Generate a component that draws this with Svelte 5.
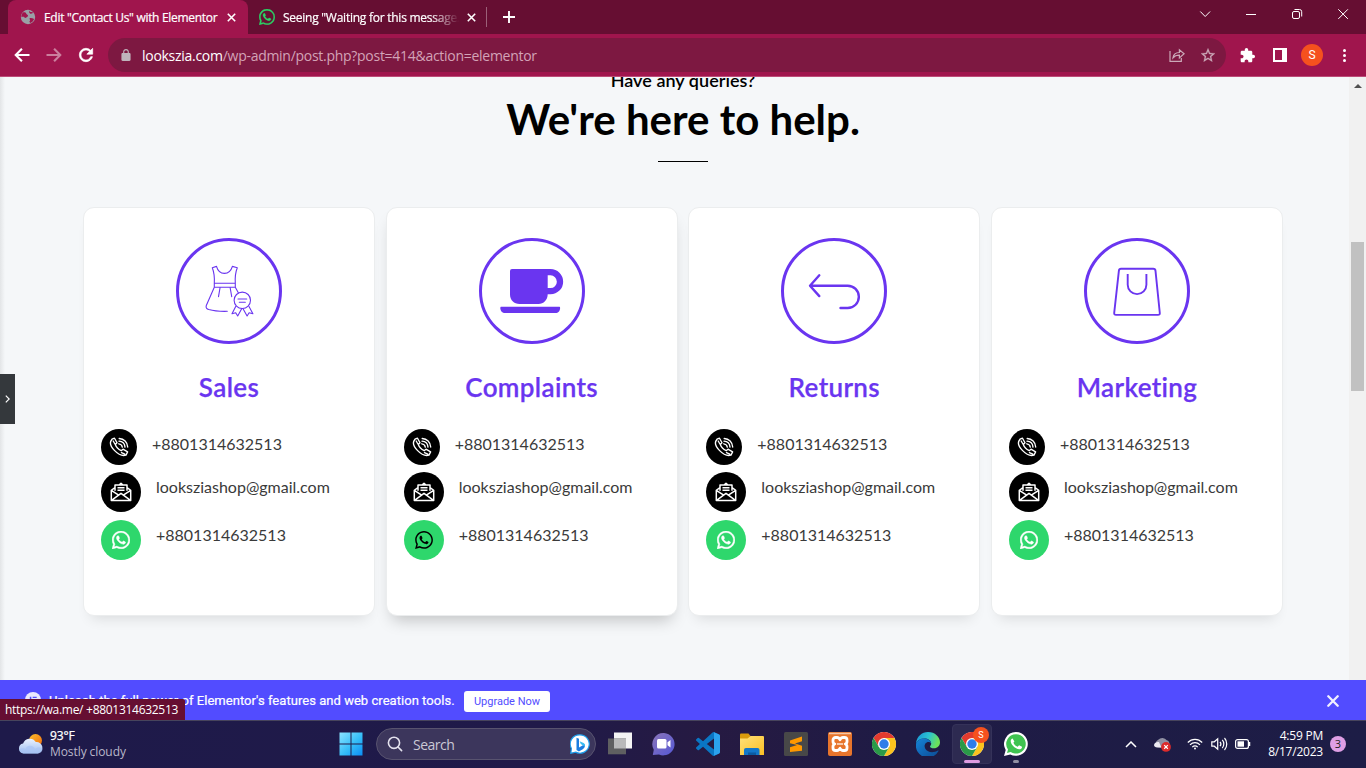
<script>
  const departments = [
    { name: 'Sales', icon: 'dress' },
    { name: 'Complaints', icon: 'cup', hovered: true },
    { name: 'Returns', icon: 'back' },
    { name: 'Marketing', icon: 'bag' }
  ];
  const phone = '+8801314632513';
  const email = 'looksziashop@gmail.com';
  const wa =
    'M380.9 97.1C339 55.1 283.2 32 223.9 32c-122.4 0-222 99.6-222 222 0 39.1 10.2 77.3 29.6 111L0 480l117.7-30.9c32.4 17.7 68.9 27 106.1 27h.1c122.3 0 224.1-99.6 224.1-222 0-59.3-25.2-115-67.1-157zm-157 341.6c-33.2 0-65.7-8.9-94-25.7l-6.7-4-69.8 18.3L72 359.2l-4.4-7c-18.5-29.4-28.2-63.3-28.2-98.2 0-101.7 82.8-184.5 184.6-184.5 49.3 0 95.6 19.2 130.4 54.1 34.8 34.9 56.2 81.2 56.1 130.5 0 101.8-84.9 184.6-186.6 184.6zm101.2-138.2c-5.5-2.8-32.8-16.2-37.9-18-5.1-1.9-8.8-2.8-12.5 2.8-3.7 5.6-14.3 18-17.6 21.8-3.2 3.7-6.5 4.2-12 1.4-32.6-16.3-54-29.1-75.5-66-5.7-9.8 5.7-9.1 16.3-30.3 1.8-3.7.9-6.9-.5-9.7-1.4-2.8-12.5-30.1-17.1-41.2-4.5-10.8-9.1-9.3-12.5-9.5-3.2-.2-6.9-.2-10.6-.2-3.7 0-9.7 1.4-14.8 6.9-5.1 5.6-19.4 19-19.4 46.3 0 27.3 19.9 53.7 22.6 57.4 2.8 3.7 39.1 59.7 94.8 83.8 35.2 15.2 49 16.5 66.6 13.9 10.7-1.6 32.8-13.4 37.4-26.4 4.6-13 4.6-24.1 3.2-26.4-1.3-2.5-5-3.9-10.5-6.6z';
</script>

{#snippet chromeLogo()}
  <svg class="app-icon" viewBox="0 0 24 24">
    <circle cx="12" cy="12" r="12" fill="#fff" />
    <path d="M1.6 6A12 12 0 0 1 22.4 6L12 6.3 6.9 15z" fill="#e33b2e" />
    <path d="M22.4 6A12 12 0 0 1 12 24l5.2-9L12 6z" fill="#fcc31e" />
    <path d="M12 24A12 12 0 0 1 1.6 6l5.3 9 10.3 0z" fill="#2a9a48" />
    <circle cx="12" cy="12" r="6" fill="#fff" />
    <circle cx="12" cy="12" r="4.7" fill="#2f7de9" />
  </svg>
{/snippet}

<div class="screen">
  <div class="tabs">
    <div class="tab active">
      <svg class="globe" viewBox="0 0 16 16">
        <circle cx="8" cy="8" r="7.2" fill="#9aa0a6" />
        <path d="M3 3.5c1.600-.4 3 .2 3.300 1.200.3 1 1.700.8 1.700 2 0 1.100-1.300 1-1.700 1.900-.3.800-1.800.2-3.200-1.100L1.400 8.200C1.300 6.200 2 4.500 3 3.500zM9.200 1.500c.3 1.300 1.200 1.500 2.200 1.500l1.800.4-1.100 1.200-2 .1-1-1.500zM9.500 9.200c1.300-.5 3.200 0 4.600.7-.7 1.900-2 3.300-3.700 4l-1.100-1.200.8-1.100z" fill="#a0154d" />
      </svg>
      <span class="tab-title t1">Edit "Contact Us" with Elementor</span>
      <svg class="x" viewBox="0 0 9 9"><path d="M.8.8l7.400 7.400M8.200.8L.8 8.200" /></svg>
    </div>
    <div class="tab second">
      <svg class="wa-fav" viewBox="0 30 448 452"><path d={wa} fill="#2bd366" stroke="#2bd366" stroke-width="8" /></svg>
      <span class="tab-title t2">Seeing "Waiting for this message.</span>
      <svg class="x" viewBox="0 0 9 9"><path d="M.8.8l7.400 7.400M8.200.8L.8 8.200" /></svg>
    </div>
    <i class="tab-rule"></i>
    <svg class="plus" viewBox="0 0 12 12"><path d="M6 0v12M0 6h12" stroke="#fff" stroke-width="1.900" /></svg>
    <div class="window-buttons">
      <svg viewBox="0 0 46 28"><path d="M18.300 11.500l4.900 5 4.900-5" /></svg>
      <svg viewBox="0 0 46 28"><path d="M18 14.500h10" /></svg>
      <svg viewBox="0 0 46 28"><rect x="18.500" y="11.500" width="7" height="7" rx="1.500" /><path d="M20.500 9.500h5a2.200 2.200 0 0 1 2.200 2.200v4.800" /></svg>
      <svg viewBox="0 0 46 28"><path d="M18.300 9.300l9.600 9.600M27.900 9.300l-9.600 9.600" /></svg>
    </div>
  </div>

  <div class="toolbar">
    <svg class="nav" viewBox="0 0 24 24" fill="#fff"><path d="M21 10.800H7.400l5.400-5.400L11 3.700 2.700 12l8.300 8.300 1.800-1.700-5.400-5.400H21z" /></svg>
    <svg class="nav faded" viewBox="0 0 24 24" fill="#fff"><path d="M3 10.800h13.600l-5.400-5.400L13 3.700l8.300 8.300-8.300 8.300-1.800-1.700 5.400-5.400H3z" /></svg>
    <svg class="nav" viewBox="0 0 24 24" fill="#fff" stroke="#fff" stroke-width=".8"><path d="M17.650 6.350C16.200 4.900 14.210 4 12 4c-4.420 0-7.990 3.580-7.990 8s3.570 8 7.990 8c3.730 0 6.840-2.550 7.730-6h-2.080c-.82 2.330-3.040 4-5.650 4-3.310 0-6-2.690-6-6s2.690-6 6-6c1.660 0 3.140.69 4.220 1.780L13 11h7V4l-2.350 2.350z" /></svg>
    <div class="omnibox">
      <svg class="lock" viewBox="4 1 16 21"><path fill="#bfb3bb" d="M18 8h-1V6c0-2.760-2.240-5-5-5S7 3.240 7 6v2H6c-1.100 0-2 .9-2 2v10c0 1.100.9 2 2 2h12c1.100 0 2-.9 2-2V10c0-1.100-.9-2-2-2zM9 6c0-1.660 1.340-3 3-3s3 1.340 3 3v2H9V6z" /></svg>
      <span class="url"><b>lookszia.com</b>/wp-admin/post.php?post=414&amp;action=elementor</span>
      <svg class="share" viewBox="0 0 16 16" fill="none" stroke="#cba9b8" stroke-width="1.200"><path d="M1 4v10.300h11.300V11M4 10.800c.4-3.400 2.700-5.200 6.400-5.300V2.700l4.700 4.100-4.700 4.100V8.200C7.500 8.200 5.500 9 4 10.800z" /></svg>
      <svg class="star" viewBox="2 2 20 19"><path fill="#cba9b8" stroke="#cba9b8" stroke-width=".4" d="M22 9.240l-7.190-.62L12 2 9.190 8.630 2 9.240l5.460 4.730L5.820 21 12 17.270 18.180 21l-1.630-7.030L22 9.240zM12 15.400l-3.760 2.270 1-4.280-3.320-2.880 4.380-.38L12 6.100l1.710 4.040 4.380.38-3.320 2.880 1 4.280L12 15.400z" /></svg>
    </div>
    <svg class="puzzle" viewBox="1 1 22 22"><path fill="#fff" d="M20.500 11H19V7c0-1.100-.9-2-2-2h-4V3.500C13 2.120 11.880 1 10.500 1S8 2.120 8 3.500V5H4c-1.100 0-1.990.9-1.990 2v3.800H3.500c1.490 0 2.700 1.210 2.700 2.700s-1.210 2.700-2.700 2.700H2V20c0 1.100.9 2 2 2h3.800v-1.500c0-1.490 1.210-2.700 2.700-2.700 1.490 0 2.700 1.210 2.700 2.700V22H17c1.100 0 2-.9 2-2v-4h1.500c1.380 0 2.500-1.120 2.500-2.500S21.880 11 20.500 11z" /></svg>
    <i class="side-panel"></i>
    <span class="avatar">S</span>
    <span class="menu"><i></i><i></i><i></i></span>
  </div>

  <main>
    <div class="page">
      <p class="kicker">Have any queries?</p>
      <h1>We're here to help.</h1>
      <i class="divider"></i>
      <div class="cards">
        {#each departments as d}
          <section class:hovered={d.hovered}>
            <svg class="badge" viewBox="0 0 106 106" fill="none" stroke="#6a35f0">
              <circle cx="53" cy="53" r="51.500" stroke-width="3" />
              {#if d.icon === 'dress'}
                <g stroke-width="1.100" stroke-linejoin="round" stroke-linecap="round">
                  <path d="M38.300 45.300c.3-5-.2-11-2-15.600l4.200-1.300c1.300 4.700 4 7 7.900 7s6.600-2.300 8-7l4.900 1.300c-1.900 4.600-2.300 10.600-2 15.600M38.300 45.300h21v4h-21zM38.300 49.300L30.300 67.500c-.8 2.200.5 3.300 2.500 4 5.200 1.500 11 2 18.500 1.800M59.300 49.300l3 5.500M44 50l-1.500 8.700M54.200 50l1.500 8.700" />
                  <circle cx="66.300" cy="62.300" r="8.200" />
                  <path d="M62 61h8.700M63.300 64.300h6M59.700 68.500L56 75.700l3.700-1 2 3.300 4.100-7.500M73 68.500l3.900 7.200-3.800-1-2 3.300-4.200-7.500" />
                </g>
              {:else if d.icon === 'cup'}
                <g fill="#6a35f0" stroke="none">
                  <path fill-rule="evenodd" d="M33 31h38.500a12.650 12.650 0 0 1 0 25.300h-2.800C68.700 62 64.500 66 59.500 66H40.500C35 66 31 62 31 56.500V33a2 2 0 0 1 2-2zm35.700 6.300V50h2.800a6.350 6.350 0 0 0 0-12.700z" />
                  <path d="M22.300 68.700h57.800c.8 0 1 .5 1 1.200 0 3-2 5.100-4.600 5.100h-50.500c-2.600 0-4.700-2.100-4.700-5.100 0-.7.3-1.200 1-1.200z" />
                </g>
              {:else if d.icon === 'back'}
                <path d="M38.300 37.300L29 47.700l9.300 10.400M29.500 47.700h37.200a11.150 11.150 0 0 1 0 22.300h-7.200" stroke-width="2.400" stroke-linecap="round" stroke-linejoin="round" />
              {:else}
                <path d="M37 30.800h32.300q2 0 2.200 2l4.300 42.200q.2 1.900-1.800 1.900H32q-2 0-1.800-2l4.700-42.200q.2-1.900 2.100-1.900zM43.700 36v10.800a9.350 9.350 0 0 0 18.700 0V36" stroke-width="1.900" />
              {/if}
            </svg>
            <h2>{d.name}</h2>
            <div class="line">
              <span class="dot small">
                <svg width="20" height="20" viewBox="0 0 20 20" fill="none" stroke="#fff" stroke-width="1.350" stroke-linecap="round" stroke-linejoin="round">
                  <path d="M3 2.200L5.500 1.200 8 5.800 6.300 7.500c.9 2.600 2.900 4.700 5.900 6.200l1.800-1.500 4.600 2.700-1.600 3.200c-3.600 1.300-8.200-1.200-11.600-4.700C1.600 9.600.3 5.300 3 2.200zM4.200 4l1.700 3M12.500 15.600l3.300 1.600" />
                  <path d="M9.800 6.800c1.900.2 3.200 1.500 3.500 3.400M10 4.200c3.300.2 5.700 2.600 6 5.900M10.200 1.500c4.800.3 8.200 3.800 8.500 8.500" />
                </svg>
              </span>
              <span>{phone}</span>
            </div>
            <div class="line mail">
              <span class="dot">
                <svg width="22" height="20" viewBox="0 0 22 20" fill="none" stroke="#fff" stroke-width="1.500" stroke-linejoin="round">
                  <path d="M5 8.800V3h12v5.800M9 3l2-1.800L13 3M5 5.500L1.300 8.300v10.200h19.400V8.300L17 5.500M1.300 8.300l7.400 4.900M20.700 8.300l-7.400 4.900M1.500 18.300L11 11.300l9.500 7M7.500 5.800h7M7.500 8.300h7" />
                </svg>
              </span>
              <span>{email}</span>
            </div>
            <div class="line chat">
              <span class="dot green">
                <svg width="18" height="18" viewBox="0 30 448 452"><path d={wa} fill={d.hovered ? '#000' : '#fff'} stroke={d.hovered ? '#000' : '#fff'} stroke-width={d.hovered ? 0 : 12} /></svg>
              </span>
              <span>{phone}</span>
            </div>
          </section>
        {/each}
      </div>
    </div>
    <div class="scrollbar">
      <svg viewBox="0 0 8 4"><path d="M0 4L4 0l4 4z" fill="#505050" /></svg>
      <i></i>
    </div>
    <i class="edge-shade"></i>
    <div class="handle"><svg viewBox="0 0 5 8"><path d="M.8.6L4.200 4 .8 7.400" fill="none" stroke="#fff" stroke-width="1.200" /></svg></div>
  </main>

  <div class="banner">
    <svg class="e-logo" viewBox="0 0 16 16"><circle cx="8" cy="8" r="8" fill="#e9e8ff" /><path d="M4.800 4.700h1.500v6.600H4.800zM7.700 4.700h4V6h-4zM7.700 7.300h4v1.300h-4zM7.700 10h4v1.300h-4z" fill="#524cff" /></svg>
    <span class="promo">Unleash the full power of Elementor's features and web creation tools.</span>
    <span class="upgrade">Upgrade Now</span>
    <svg class="dismiss" viewBox="0 0 12 12"><path d="M1.300 1.300l9.400 9.400M10.700 1.300l-9.400 9.400" stroke="#f1f0ff" stroke-width="2.300" stroke-linecap="round" /></svg>
    <div class="status"><span>https://wa.me/ +8801314632513</span></div>
  </div>

  <div class="taskbar">
    <div class="weather">
      <svg viewBox="0 0 26 22">
        <defs>
          <linearGradient id="cl" x1="0" y1="0" x2="0" y2="1"><stop offset="0" stop-color="#eaf2ff" /><stop offset="1" stop-color="#9dbdf0" /></linearGradient>
          <linearGradient id="sun" x1="0" y1="0" x2="1" y2="1"><stop offset="0" stop-color="#fbc02d" /><stop offset="1" stop-color="#f26a0d" /></linearGradient>
        </defs>
        <circle cx="17.500" cy="7.500" r="6.500" fill="url(#sun)" />
        <path d="M5.500 20.500a5 5 0 0 1-.4-9.900 7 7 0 0 1 12.700-1.500 5.800 5.800 0 0 1 2.100 11.400z" fill="url(#cl)" />
        <path d="M5.500 20.500h14.400a5 5 0 0 0 4.600-4.700c-3-2.300-6-1.500-7.500.2-1.700-4-8-4.500-9.500 0-1.800-1.200-4.500-.7-6 .6.5 2.200 2 3.700 4 3.900z" fill="#a9c5f5" opacity=".7" />
      </svg>
      <div><span class="temp">93°F</span><span class="cond">Mostly cloudy</span></div>
    </div>
    <div class="apps">
      <div class="slot">
        <svg class="app-icon" viewBox="0 0 24 24">
          <defs><linearGradient id="win" x1="0" y1="0" x2="1" y2="1"><stop offset="0" stop-color="#8ce4ff" /><stop offset=".55" stop-color="#35bdf8" /><stop offset="1" stop-color="#0b8df5" /></linearGradient></defs>
          <path d="M.5.500h11v11H.5zM12.500.500h11v11h-11zM.5 12.500h11v11H.5zM12.500 12.500h11v11h-11z" fill="url(#win)" />
        </svg>
      </div>
      <div class="search">
        <svg class="lens" viewBox="0 0 16 16" fill="none" stroke="#e4e2ee" stroke-width="1.600" stroke-linecap="round"><circle cx="7" cy="6.800" r="5.600" /><path d="M11 11l3.600 3.600" /></svg>
        <span>Search</span>
        <svg class="bing" viewBox="0 0 20 20">
          <path d="M10 .8a9.200 9.200 0 1 1-4.300 17.300L.8 19.300l.6-4.800A9.200 9.200 0 0 1 10 .8z" fill="#fff" stroke="#1a9bea" stroke-width="1.200" />
          <path d="M6.500 3.800l2.500.9v8.700l5.600-3.100c.9 2.400-.3 4-1.800 4.900l-3.900 2.200-2.400-1.500z" fill="#1b7de0" />
          <path d="M9.600 7.200l4 1.700c1.400.7 1.600 2.200 1 3.500L10.800 10z" fill="#38bdf2" />
        </svg>
      </div>
      <div class="slot">
        <svg class="app-icon" viewBox="0 0 24 24">
          <path d="M6 .5h18v16H6z" fill="#f4f4f4" /><path d="M0 6.500h18v15.800H0z" fill="#5f5f61" /><path d="M6 6.500h12v10H6z" fill="#b9b9ba" />
        </svg>
      </div>
      <div class="slot">
        <svg class="app-icon" viewBox="0 0 24 24">
          <defs><linearGradient id="teams" x1="0" y1="0" x2="1" y2="1"><stop offset="0" stop-color="#8a74b8" /><stop offset="1" stop-color="#5558d6" /></linearGradient></defs>
          <path d="M12 1a11.200 11.200 0 1 1-5 21.500L.8 23l1-5.300A11.200 11.200 0 0 1 12 1z" fill="url(#teams)" />
          <rect x="5" y="7" width="9.500" height="9.500" rx="1.500" fill="#fff" /><path d="M15.500 10.300L18.500 8v7.600l-3-2.300z" fill="#fff" />
        </svg>
      </div>
      <div class="slot">
        <svg class="app-icon" viewBox="0 0 24 24">
          <path fill="#0a76c4" d="M23.150 2.587L18.210.21a1.494 1.494 0 0 0-1.705.29l-9.460 8.630-4.120-3.128a.999.999 0 0 0-1.276.057L.327 7.261A1 1 0 0 0 .326 8.740L3.899 12 .326 15.260a1 1 0 0 0 .001 1.479L1.650 17.940a.999.999 0 0 0 1.276.057l4.120-3.128 9.460 8.630a1.492 1.492 0 0 0 1.704.29l4.942-2.377A1.500 1.500 0 0 0 24 20.060V3.939a1.500 1.500 0 0 0-.85-1.352zm-5.146 14.861L10.826 12l7.178-5.448v10.896z" />
          <path fill="#2ba2ee" d="M18 .2l5.100 2.400q.9.400.9 1.400v16q0 1-.9 1.400L18 23.800z" />
        </svg>
      </div>
      <div class="slot">
        <svg class="app-icon" viewBox="0 0 24 24">
          <defs><linearGradient id="fold" x1="0" y1="0" x2="1" y2="1"><stop offset="0" stop-color="#ffe17a" /><stop offset="1" stop-color="#fbbf24" /></linearGradient></defs>
          <path d="M0 2.500q0-1 1-1h7.500l2 2.500L8 7H0z" fill="#d99a0c" />
          <path d="M0 6.500h7.500L10.500 4H23q1 0 1 1v18H0z" fill="url(#fold)" />
          <path d="M4 23v-5q0-2 2-2h11.500q2 0 2 2v5z" fill="#1277c9" /><path d="M8 20.500h8V23H8z" fill="#0b5ba1" />
        </svg>
      </div>
      <div class="slot">
        <svg class="app-icon" viewBox="0 0 24 24">
          <rect width="24" height="24" rx="1.500" fill="#484848" />
          <path d="M6 8.500L18 4.500v4.700l-7 2.300 7 2.200v5L6 20v-4.700l7.200-2.200L6 11.200z" fill="#ff9800" />
        </svg>
      </div>
      <div class="slot">
        <svg class="app-icon" viewBox="0 0 24 24">
          <rect width="24" height="24" rx="2" fill="#e8752c" /><path d="M1 1.500h22" stroke="#f6c6a4" stroke-width="1.500" />
          <path d="M7.500 5.500H9q2 0 3 2.300 1-2.300 3-2.300h1.500A2.500 2.500 0 0 1 19 8v1.500q0 2-1.800 2.500 1.800.6 1.800 2.500V16a2.500 2.500 0 0 1-2.500 2.500H15q-2 0-3-2.300-1 2.300-3 2.300H7.500A2.500 2.500 0 0 1 5 16v-1.500q0-1.900 1.800-2.500Q5 11.500 5 9.500V8a2.500 2.500 0 0 1 2.500-2.500z" fill="none" stroke="#fff" stroke-width="2.800" stroke-linejoin="round" />
          <path d="M9 12h6" stroke="#fff" stroke-width="1.200" />
        </svg>
      </div>
      <div class="slot">{@render chromeLogo()}</div>
      <div class="slot">
        <svg class="app-icon" viewBox="0 0 24 24">
          <defs>
            <linearGradient id="e1" x1="0" y1="0" x2="1" y2=".3"><stop offset="0" stop-color="#1690d8" /><stop offset=".55" stop-color="#2bc3d2" /><stop offset="1" stop-color="#6be05a" /></linearGradient>
            <linearGradient id="e2" x1="0" y1="0" x2="1" y2="1"><stop offset="0" stop-color="#1584d8" /><stop offset="1" stop-color="#0c4a94" /></linearGradient>
          </defs>
          <path d="M0 11.500C.6 4.500 5.800 0 12 0c7 0 12 5 12 10.300 0 3.500-2.600 6-6 6-2.500 0-4-.9-4-1.900 0-.6 1.200-1.200 1.200-3C15.200 8.600 12 6.500 8.500 6.500 4.500 6.500 1.500 8.300 0 11.500z" fill="url(#e1)" />
          <path d="M0 11.700C1.200 8.300 4.800 6.300 8.600 6.500c3.400.2 6.400 2.300 6.500 4.700-1-1-2.600-1.600-4-1-2.500 1.100-3.200 4-1.800 6.600 2.300 4 8.500 4.300 12.600 1.700.5-.3.900.1.600.6A12 12 0 0 1 0 11.700z" fill="url(#e2)" />
        </svg>
      </div>
      <div class="slot current">{@render chromeLogo()}<span class="mini">S</span><i class="run"></i></div>
      <div class="slot">
        <svg class="app-icon" viewBox="0 0 24 24">
          <path d="M12.200 0A11.900 11.900 0 1 1 6.300 22.400L0 24l1.700-6.100A11.900 11.900 0 0 1 12.200 0z" fill="#fff" />
          <path d="M12.200 2.200A9.700 9.700 0 1 1 6.700 20L3 21l1-3.600A9.700 9.700 0 0 1 12.200 2.200z" fill="#3fc351" />
          <path d="M8.600 6.500c-.6-.1-1.900.8-1.900 2.600 0 3.500 4.700 8.200 8.600 8.200 1.500 0 2.800-1.200 2.700-2.500l-2.900-1.500-1.500 1.500c-2-.8-3.400-2.200-4.200-4l1-1.300z" fill="#fff" />
        </svg>
        <i class="run idle"></i>
      </div>
    </div>
    <div class="tray">
      <svg class="caret" viewBox="0 0 12 7"><path d="M1 6l5-5 5 5" fill="none" stroke="#fff" stroke-width="1.500" /></svg>
      <svg class="cloud" viewBox="0 0 16 14"><path d="M4 9.500A3.700 3.700 0 0 1 4 2.600 5 5 0 0 1 12 3c2 .5 2.500 2 2.500 3.500L8 10z" fill="#8f90a3" /><path d="M0 7.500C.3 5 3 4.300 4.800 4.800L7 9.800H3C1.300 9.800 0 9 0 7.500z" fill="#eceaf2" /><circle cx="11.300" cy="9.300" r="4.600" fill="#dc2b2b" /><path d="M9.600 7.600l3.400 3.400M13 7.600L9.600 11" stroke="#fff" stroke-width="1.100" /></svg>
      <svg class="wifi" viewBox="0 0 16 12" fill="none" stroke="#fff" stroke-width="1.200"><path d="M.8 4.500C4.800.2 11.200.2 15.200 4.500M3 6.900c2.900-3 7.100-3 10 0M5.300 9.200c1.600-1.700 3.800-1.700 5.400 0" /><circle cx="8" cy="10.400" r="1" fill="#fff" stroke="none" /></svg>
      <svg class="vol" viewBox="0 0 17 14" fill="none" stroke="#fff" stroke-width="1.200"><path d="M.8 4.800v4.400h2.500l3.400 3V1.800l-3.400 3zM9 4.800c1 1.200 1 3.200 0 4.400M11.300 2.900c2 2.300 2 5.900 0 8.200M13.500 1c3 3.300 3 8.700 0 12" /></svg>
      <svg class="batt" viewBox="0 0 16 10"><rect x=".6" y=".6" width="12.800" height="8.800" rx="2" fill="none" stroke="#fff" stroke-width="1.200" /><rect x="2.500" y="2.300" width="6.500" height="5.400" fill="#fff" /><path d="M14.500 3v4" stroke="#fff" stroke-width="1.500" /></svg>
      <div class="clock"><span>4:59 PM</span><span class="date">8/17/2023</span></div>
      <b class="count">3</b>
    </div>
  </div>
</div>

<style>
  :global(body) { margin: 0; overflow: hidden; }
  .screen {
    width: 1366px; height: 768px; display: flex; flex-direction: column; overflow: hidden;
    font-family: "Open Sans", "Noto Sans", sans-serif; background: #f5f7f9;
  }
  svg { display: block; flex: none; }
  i { display: block; flex: none; }
  span { white-space: nowrap; }

  .tabs { height: 34px; flex: none; display: flex; background: #660e32; color: #fff; align-items: center; }
  .tab { display: flex; align-items: center; height: 34px; box-sizing: border-box; }
  .active { width: 240px; margin-left: 8px; background: #a0154d; border-radius: 8px 8px 0 0; padding-left: 12px; }
  .globe { width: 16px; height: 16px; margin-right: 8px; }
  .wa-fav { width: 16px; height: 16px; margin-right: 8px; }
  .second { padding-left: 11px; }
  .tab-title { font-size: 12px; overflow: hidden; letter-spacing: -.3px; -webkit-text-stroke: .2px currentColor; }
  .t1 { width: 175px; margin-right: 8px; }
  .t2 { width: 176px; margin-right: 8px; letter-spacing: -.25px; -webkit-mask-image: linear-gradient(90deg, #000 84%, transparent); mask-image: linear-gradient(90deg, #000 84%, transparent); }
  .x { width: 9px; height: 9px; stroke: #fff; stroke-width: 1.600; }
  .tab-rule { width: 1px; height: 20px; background: #9b6078; margin: 0 16px 0 10px; }
  .plus { width: 12px; height: 12px; }
  .window-buttons { margin-left: auto; display: flex; height: 34px; }
  .window-buttons svg { width: 46px; height: 28px; fill: none; stroke: #fff; stroke-width: 1; }

  .toolbar { height: 43px; flex: none; box-sizing: border-box; display: flex; align-items: center; background: #a0154d; border-bottom: 1px solid #bc4c78; padding-left: 12px; }
  .nav { width: 20px; height: 20px; margin-right: 12px; }
  .faded { opacity: .45; }
  .omnibox { width: 1118px; height: 34px; box-sizing: border-box; border-radius: 17px; background: #7d1841; display: flex; align-items: center; padding: 0 11px 0 13px; margin: 0 14px 0 0; }
  .lock { width: 10px; height: 12px; margin-right: 11px; }
  .url { font-size: 14px; color: #d3a3b7; letter-spacing: -.28px; }
  .url b { color: #fff; font-weight: 400; }
  .share { width: 16px; height: 16px; margin-left: auto; margin-right: 16px; }
  .star { width: 14px; height: 14px; }
  .puzzle { width: 15px; height: 15px; margin-right: 18px; }
  .side-panel { width: 14px; height: 14px; box-sizing: border-box; border: 2px solid #fff; border-right-width: 5px; margin-right: 14px; }
  .avatar { width: 22px; height: 22px; border-radius: 50%; background: #f5511e; color: #fff; font: 12px/22px Roboto, sans-serif; text-align: center; margin-right: 20px; }
  .menu { display: flex; flex-direction: column; gap: 2px; }
  .menu i { width: 3px; height: 3px; border-radius: 50%; background: #fff; }

  main { position: relative; height: 603px; flex: none; display: flex; overflow: hidden; font-family: Lato, sans-serif; }
  .page { width: 1349px; display: flex; flex-direction: column; align-items: center; box-sizing: border-box; padding-left: 17px; }
  .kicker { margin: -8px 0 0; font-size: 18px; line-height: 22px; font-weight: 600; letter-spacing: .03px; color: #000; }
  h1 { margin: 5px 0 0; font-size: 42px; line-height: 46px; font-weight: 700; color: #000; }
  .divider { width: 50px; height: 1px; background: #000; margin-top: 19px; }
  .cards { width: 1200px; margin-top: 45px; display: grid; grid-template-columns: repeat(4, 292px); justify-content: space-between; }
  section {
    height: 409px; box-sizing: border-box; background: #fff; border: 1px solid #ebedee; border-radius: 11px;
    box-shadow: 0 10px 14px -8px rgba(0, 0, 0, .12); padding: 30px 17px 0; display: flex; flex-direction: column;
  }
  .hovered { box-shadow: 0 10px 16px -6px rgba(0, 0, 0, .22); }
  .badge { width: 106px; height: 106px; align-self: center; }
  h2 { margin: 27px 0 0; font-size: 26px; line-height: 32px; font-weight: 600; letter-spacing: .35px; -webkit-text-stroke: .25px currentColor; color: #6a35f0; text-align: center; font-variant-ligatures: none; }
  .line { display: flex; gap: 15px; margin-top: 26px; height: 36px; font-size: 16px; line-height: 30px; color: #3a3a3a; }
  .line.mail { margin-top: 7px; height: 40px; }
  .line.chat { margin-top: 8px; height: 40px; }
  .dot { width: 40px; height: 40px; border-radius: 50%; background: #000; display: grid; place-items: center; }
  .small { width: 36px; height: 36px; }
  .green { background: #2ed76c; }
  .scrollbar { width: 17px; background: #f1f1f1; display: flex; flex-direction: column; align-items: center; }
  .scrollbar svg { width: 8px; height: 4px; margin: 7px 0 154px; }
  .scrollbar i { width: 13px; height: 149px; background: #c1c1c1; }
  .edge-shade { position: absolute; left: 0; top: 0; width: 5px; height: 603px; background: linear-gradient(90deg, #e3e5e7, transparent); }
  .handle { position: absolute; left: 0; top: 297px; width: 15px; height: 50px; background: #34383c; display: grid; place-items: center; }
  .handle svg { width: 5px; height: 8px; }

  .banner { position: relative; height: 40px; flex: none; display: flex; align-items: center; background: #524cff; color: #fff; font-family: Roboto, sans-serif; padding: 0 27px 0 25px; }
  .e-logo { width: 16px; height: 16px; margin-right: 8px; }
  .promo { width: 402px; font-size: 13px; font-weight: 400; letter-spacing: .04px; -webkit-text-stroke: .2px #fff; margin-right: 13px; }
  .upgrade { width: 86px; height: 21px; border-radius: 3px; background: #fff; color: #524cff; font-size: 11px; line-height: 21px; text-align: center; margin-top: 3px; }
  .dismiss { width: 12px; height: 12px; margin-left: auto; margin-top: 1px; }
  .status { position: absolute; left: 0; top: 19px; width: 185px; height: 21px; border-radius: 0 2px 0 0; background: #660e32; font: 12px/21px "Open Sans", sans-serif; }
  .status span { margin-left: 5px; letter-spacing: -.29px; }

  .taskbar { height: 48px; flex: none; box-sizing: border-box; border-top: 1px solid #47445c; padding-bottom: 1px; display: flex; align-items: center; background: linear-gradient(90deg, #1e1a4a, #201a49 40%, #261a42 52%, #1f1b45 65%, #1d1d46); color: #fff; }
  .weather { width: 313px; padding-left: 18px; display: flex; align-items: center; gap: 6px; font-size: 12px; line-height: 16px; }
  .weather svg { width: 26px; height: 22px; }
  .weather div { display: flex; flex-direction: column; }
  .temp { -webkit-text-stroke: .25px #fff; letter-spacing: -.1px; }
  .cond { color: #b9b7c9; letter-spacing: -.08px; }
  .apps { display: flex; align-items: center; }
  .slot { position: relative; width: 44px; height: 40px; display: grid; place-items: center; }
  .slot:first-child { width: 40px; margin-right: 5px; }
  .app-icon { width: 24px; height: 24px; }
  .search { width: 220px; height: 32px; box-sizing: border-box; border: 1px solid #58536f; border-radius: 16px; background: #3c365c; display: flex; align-items: center; padding: 0 5px 0 10px; margin-right: 2px; font-size: 14px; color: #cac8d6; }
  .lens { width: 16px; height: 16px; margin-right: 10px; }
  .search span { letter-spacing: -.5px; }
  .bing { width: 20px; height: 20px; margin-left: auto; }
  .current { width: 40px; height: 40px; box-sizing: border-box; margin: 0 2px; background: #2d2a51; border: 1px solid #353259; border-radius: 4px; }
  .mini { position: absolute; left: 20px; top: 2px; width: 16px; height: 16px; border-radius: 50%; background: #f5511e; font: 9px/16px Roboto, sans-serif; text-align: center; }
  .run { position: absolute; left: 11px; bottom: 0; width: 16px; height: 3px; border-radius: 2px; background: #df9be2; }
  .idle { left: 19px; bottom: 1px; width: 6px; background: #918fa3; }
  .tray { margin-left: auto; display: flex; align-items: center; }
  .caret { width: 12px; height: 7px; margin-right: 17px; }
  .cloud { width: 17px; height: 15px; margin-right: 16px; }
  .wifi { width: 16px; height: 12px; margin-right: 8px; }
  .vol { width: 17px; height: 14px; margin-right: 7px; }
  .batt { width: 16px; height: 10px; }
  .clock { width: 72px; display: flex; flex-direction: column; text-align: right; font-size: 12px; line-height: 16px; letter-spacing: -.22px; }
  .count { width: 16px; height: 16px; border-radius: 50%; background: #df9fe5; color: #222; font: 11px/16px "Open Sans", sans-serif; text-align: center; margin: 0 20px 0 7px; }
</style>
